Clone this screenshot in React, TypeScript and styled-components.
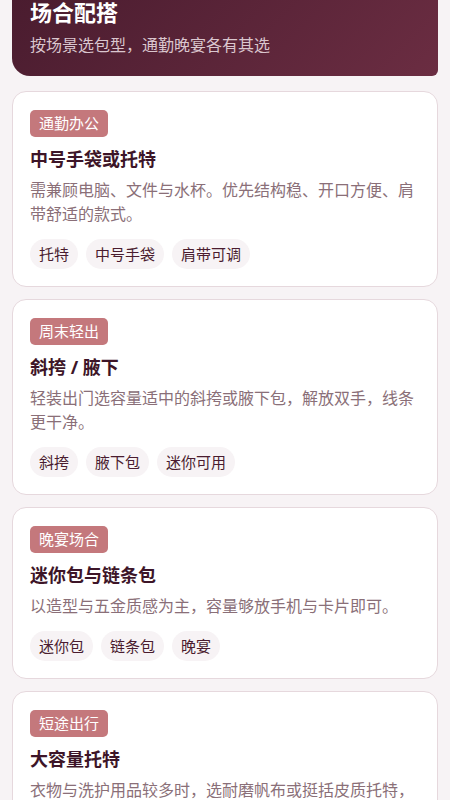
import React from "react";
import styled, { createGlobalStyle } from "styled-components";

const OccasionList = [
  {
    id: 1,
    badge: "通勤办公",
    title: "中号手袋或托特",
    text: "需兼顾电脑、文件与水杯。优先结构稳、开口方便、肩带舒适的款式。",
    tags: ["托特", "中号手袋", "肩带可调"],
  },
  {
    id: 2,
    badge: "周末轻出",
    title: "斜挎 / 腋下",
    text: "轻装出门选容量适中的斜挎或腋下包，解放双手，线条更干净。",
    tags: ["斜挎", "腋下包", "迷你可用"],
  },
  {
    id: 3,
    badge: "晚宴场合",
    title: "迷你包与链条包",
    text: "以造型与五金质感为主，容量够放手机与卡片即可。",
    tags: ["迷你包", "链条包", "晚宴"],
  },
  {
    id: 4,
    badge: "短途出行",
    title: "大容量托特",
    text: "衣物与洗护用品较多时，选耐磨帆布或挺括皮质托特，",
    tags: [],
  },
];

function App() {
  return (
    <>
      <GlobalStyle />
      <Page>
        <Hero>
          <HeroTitle>场合配搭</HeroTitle>
          <HeroText>按场景选包型，通勤晚宴各有其选</HeroText>
        </Hero>
        {OccasionList.map((item) => {
          return (
            <Card key={item.id}>
              <Badge>{item.badge}</Badge>
              <Title>{item.title}</Title>
              <Text>{item.text}</Text>
              {item.tags.length > 0 && (
                <Tags>
                  {item.tags.map((tag) => (
                    <Tag key={tag}>{tag}</Tag>
                  ))}
                </Tags>
              )}
            </Card>
          );
        })}
      </Page>
    </>
  );
}

const GlobalStyle = createGlobalStyle`
  * {
    box-sizing: border-box;
  }
  html {
    scrollbar-width: none;
  }
  body {
    margin: 0;
    background: #f7f3f5;
    color: #4a1c2f;
    font-family: "Noto Sans", "Noto Sans CJK SC", sans-serif;
  }
  h1, h2, p, ul {
    margin: 0;
    padding: 0;
  }
`;

const Page = styled.main`
  display: flex;
  flex-direction: column;
  gap: 12px;
  padding: 0 12px 12px;
`;

const Hero = styled.header`
  margin-bottom: 3px;
  padding: 0 18px 18px;
  border-radius: 0 0 6px 18px;
  background: linear-gradient(135deg, #4a1c2f, #6b2d42);
  color: #fff;
`;

const HeroTitle = styled.h1`
  margin-bottom: 8px;
  font-size: 22px;
  line-height: 24px;
`;

const HeroText = styled.p`
  color: #dac6ce;
  font-size: 16px;
  line-height: 26px;
`;

const Card = styled.section`
  padding: 18px 17px 17px;
  border: 1px solid #e6d8dd;
  border-radius: 14px;
  background: #fff;
`;

const Badge = styled.span`
  display: inline-block;
  padding: 0 9px;
  border-radius: 5px;
  background: #c4787c;
  color: #fff;
  font-size: 15px;
  line-height: 27px;
  vertical-align: top;
`;

const Title = styled.h2`
  margin: 8px 0 4px;
  color: #3d1528;
  font-size: 18px;
  line-height: 29px;
`;

const Text = styled.p`
  color: #8a6f78;
  font-size: 16px;
  line-height: 24px;
`;

const Tags = styled.ul`
  display: flex;
  flex-wrap: wrap;
  gap: 8px;
  margin-top: 13px;
  list-style: none;
`;

const Tag = styled.li`
  padding: 0 9px;
  border-radius: 15px;
  background: #f7f3f5;
  font-size: 15px;
  line-height: 30px;
`;

export default App;
